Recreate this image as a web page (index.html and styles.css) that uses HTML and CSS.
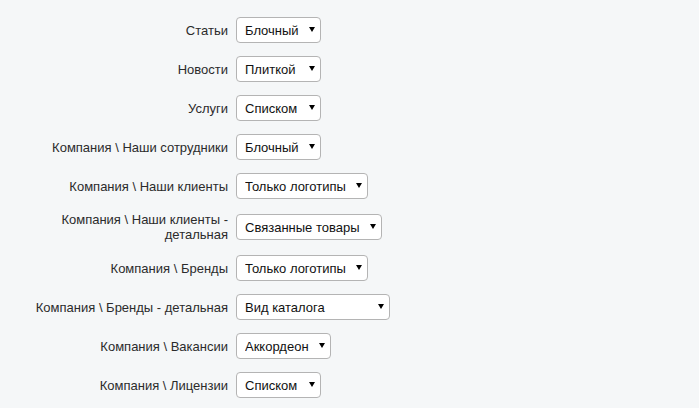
FILE: index.html
```html
<!DOCTYPE html>
<html lang="ru">

<head>
    <meta charset="UTF-8">
    <meta name="viewport" content="width=device-width, initial-scale=1.0">

    <link rel="stylesheet" href="styles.css">
</head>

<body>
    <form class="settings">
        <label class="field-label" for="articles">Статьи</label>
        <div class="select-wrap w-s">
            <select id="articles">
                <option>Блочный</option>
                <option>Списком</option>
            </select>
        </div>

        <label class="field-label" for="news">Новости</label>
        <div class="select-wrap w-s">
            <select id="news">
                <option>Плиткой</option>
                <option>Списком</option>
            </select>
        </div>

        <label class="field-label" for="services">Услуги</label>
        <div class="select-wrap w-s">
            <select id="services">
                <option>Списком</option>
                <option>Блочный</option>
            </select>
        </div>

        <label class="field-label" for="staff">Компания \ Наши сотрудники</label>
        <div class="select-wrap w-s">
            <select id="staff">
                <option>Блочный</option>
                <option>Списком</option>
            </select>
        </div>

        <label class="field-label" for="clients">Компания \ Наши клиенты</label>
        <div class="select-wrap w-m">
            <select id="clients">
                <option>Только логотипы</option>
                <option>Списком</option>
            </select>
        </div>

        <label class="field-label" for="clients-detail">Компания \ Наши клиенты - детальная</label>
        <div class="select-wrap w-l">
            <select id="clients-detail">
                <option>Связанные товары</option>
                <option>Без товаров</option>
            </select>
        </div>

        <label class="field-label" for="brands">Компания \ Бренды</label>
        <div class="select-wrap w-m">
            <select id="brands">
                <option>Только логотипы</option>
                <option>Списком</option>
            </select>
        </div>

        <label class="field-label" for="brands-detail">Компания \ Бренды - детальная</label>
        <div class="select-wrap w-xl">
            <select id="brands-detail">
                <option>Вид каталога</option>
                <option>Связанные товары</option>
            </select>
        </div>

        <label class="field-label" for="vacancies">Компания \ Вакансии</label>
        <div class="select-wrap w-a">
            <select id="vacancies">
                <option>Аккордеон</option>
                <option>Списком</option>
            </select>
        </div>

        <label class="field-label" for="licenses">Компания \ Лицензии</label>
        <div class="select-wrap w-s">
            <select id="licenses">
                <option>Списком</option>
                <option>Блочный</option>
            </select>
        </div>
    </form>
</body>

</html>
```

FILE: styles.css
```css
* {
    margin: 0;
    padding: 0;
    box-sizing: border-box;
}

body {
    font-family: 'Liberation Sans', Arial, sans-serif;
    font-size: 13px;
    background: #f5f7f8;
    color: #2b2b2b;
}

.settings {
    display: grid;
    grid-template-columns: 200px auto;
    column-gap: 8px;
    row-gap: 13px;
    align-items: center;
    justify-items: start;
    padding: 17px 0 0 28px;
}

.field-label {
    justify-self: end;
    text-align: right;
    line-height: 15px;
}

.select-wrap {
    position: relative;
}

.select-wrap::after {
    content: '';
    position: absolute;
    right: 6px;
    top: 10px;
    border-left: 3px solid transparent;
    border-right: 3px solid transparent;
    border-top: 5px solid #000;
    pointer-events: none;
}

select {
    appearance: none;
    -webkit-appearance: none;
    display: block;
    width: 100%;
    height: 26px;
    padding: 0 20px 0 8px;
    font-family: inherit;
    font-size: 13px;
    color: #111;
    background: #fff;
    border: 1px solid #b4b4b4;
    border-radius: 4px;
}

.w-s {
    width: 85px;
}

.w-a {
    width: 95px;
}

.w-m {
    width: 132px;
}

.w-l {
    width: 146px;
}

.w-xl {
    width: 154px;
}
```
